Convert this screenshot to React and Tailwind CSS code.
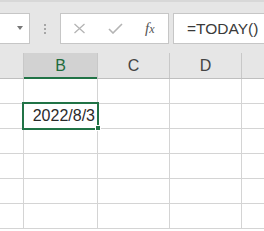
import React from 'react';

const cols = [
  { key: 'corner', w: 'w-[24px]', label: '' },
  { key: 'B', w: 'w-[74px]', label: 'B' },
  { key: 'C', w: 'w-[72px]', label: 'C' },
  { key: 'D', w: 'w-[72px]', label: 'D' },
  { key: 'E', w: 'flex-1', label: '' },
];

const rows = [0, 1, 2, 3, 4, 5];

const App = () => {
  return (
    <div className="relative h-[231px] w-[264px] overflow-hidden bg-white font-['Liberation_Sans',Arial,sans-serif]">
      {/* toolbar */}
      <div className="h-[53px] border-t-2 border-[#d8d8d8] bg-[#e6e6e6] pt-[11px]">
        <div className="flex h-[31px]">
          <div className="relative w-[30px] border border-l-0 border-[#c6c6c6] bg-white">
            <div className="absolute left-[17px] top-[12px] h-0 w-0 border-x-[3px] border-t-[4px] border-x-transparent border-t-[#777]" />
          </div>
          <div className="ml-[14px] flex flex-col justify-center gap-[2px]">
            <span className="h-[2px] w-[2px] bg-[#a6a6a6]" />
            <span className="h-[2px] w-[2px] bg-[#a6a6a6]" />
            <span className="h-[2px] w-[2px] bg-[#a6a6a6]" />
          </div>
          <div className="ml-[14px] flex w-[109px] items-center border border-[#c6c6c6] bg-white">
            <svg className="ml-[12px]" width="13" height="11" viewBox="0 0 13 11">
              <path d="M1.5 1 L11.5 10 M11.5 1 L1.5 10" stroke="#b4b4b4" strokeWidth="1.3" fill="none" />
            </svg>
            <svg className="ml-[22px]" width="15" height="11" viewBox="0 0 15 11">
              <path d="M1 6 L5 10 L14 1" stroke="#b4b4b4" strokeWidth="1.6" fill="none" />
            </svg>
            <span className="ml-[22px] font-['Liberation_Serif',serif] text-[15px] italic leading-none text-[#555]">
              f<span className="text-[12px]">x</span>
            </span>
          </div>
          <div className="ml-[4px] flex flex-1 items-center border border-r-0 border-[#c6c6c6] bg-white pl-[13px] text-[15.5px] text-[#3a3a3a]">
            =TODAY()
          </div>
        </div>
      </div>

      {/* column headers */}
      <div className="flex h-[26px] border-b border-[#bfbfbf] bg-[#e6e6e6]">
        {cols.map((c) => (
          <div
            key={c.key}
            className={`${c.w} flex items-center justify-center border-r border-[#c8c8c8] text-[16px] ${
              c.key === 'B' ? 'relative bg-[#d2d2d2] text-[#1e6b3c]' : 'text-[#444]'
            } ${c.key === 'E' ? 'border-r-0' : ''}`}
          >
            {c.label}
            {c.key === 'B' && <div className="absolute -bottom-px left-0 right-0 h-[2px] bg-[#217346]" />}
          </div>
        ))}
      </div>

      {/* grid */}
      {rows.map((r) => (
        <div key={r} className="flex h-[25px] border-b border-[#d4d4d4]">
          {cols.map((c) => (
            <div key={c.key} className={`${c.w} ${c.key === 'E' ? '' : 'border-r border-[#d4d4d4]'}`} />
          ))}
        </div>
      ))}

      {/* selected cell */}
      <div className="absolute left-[22px] top-[102px] flex h-[28px] w-[77px] items-center justify-end border-2 border-[#217346] pr-[2px] text-[16px] text-[#2a2a2a]">
        2022/8/3
      </div>
      <div className="absolute left-[95px] top-[125px] h-[6px] w-[6px] border border-white bg-[#217346]" />
    </div>
  );
};

export default App;
